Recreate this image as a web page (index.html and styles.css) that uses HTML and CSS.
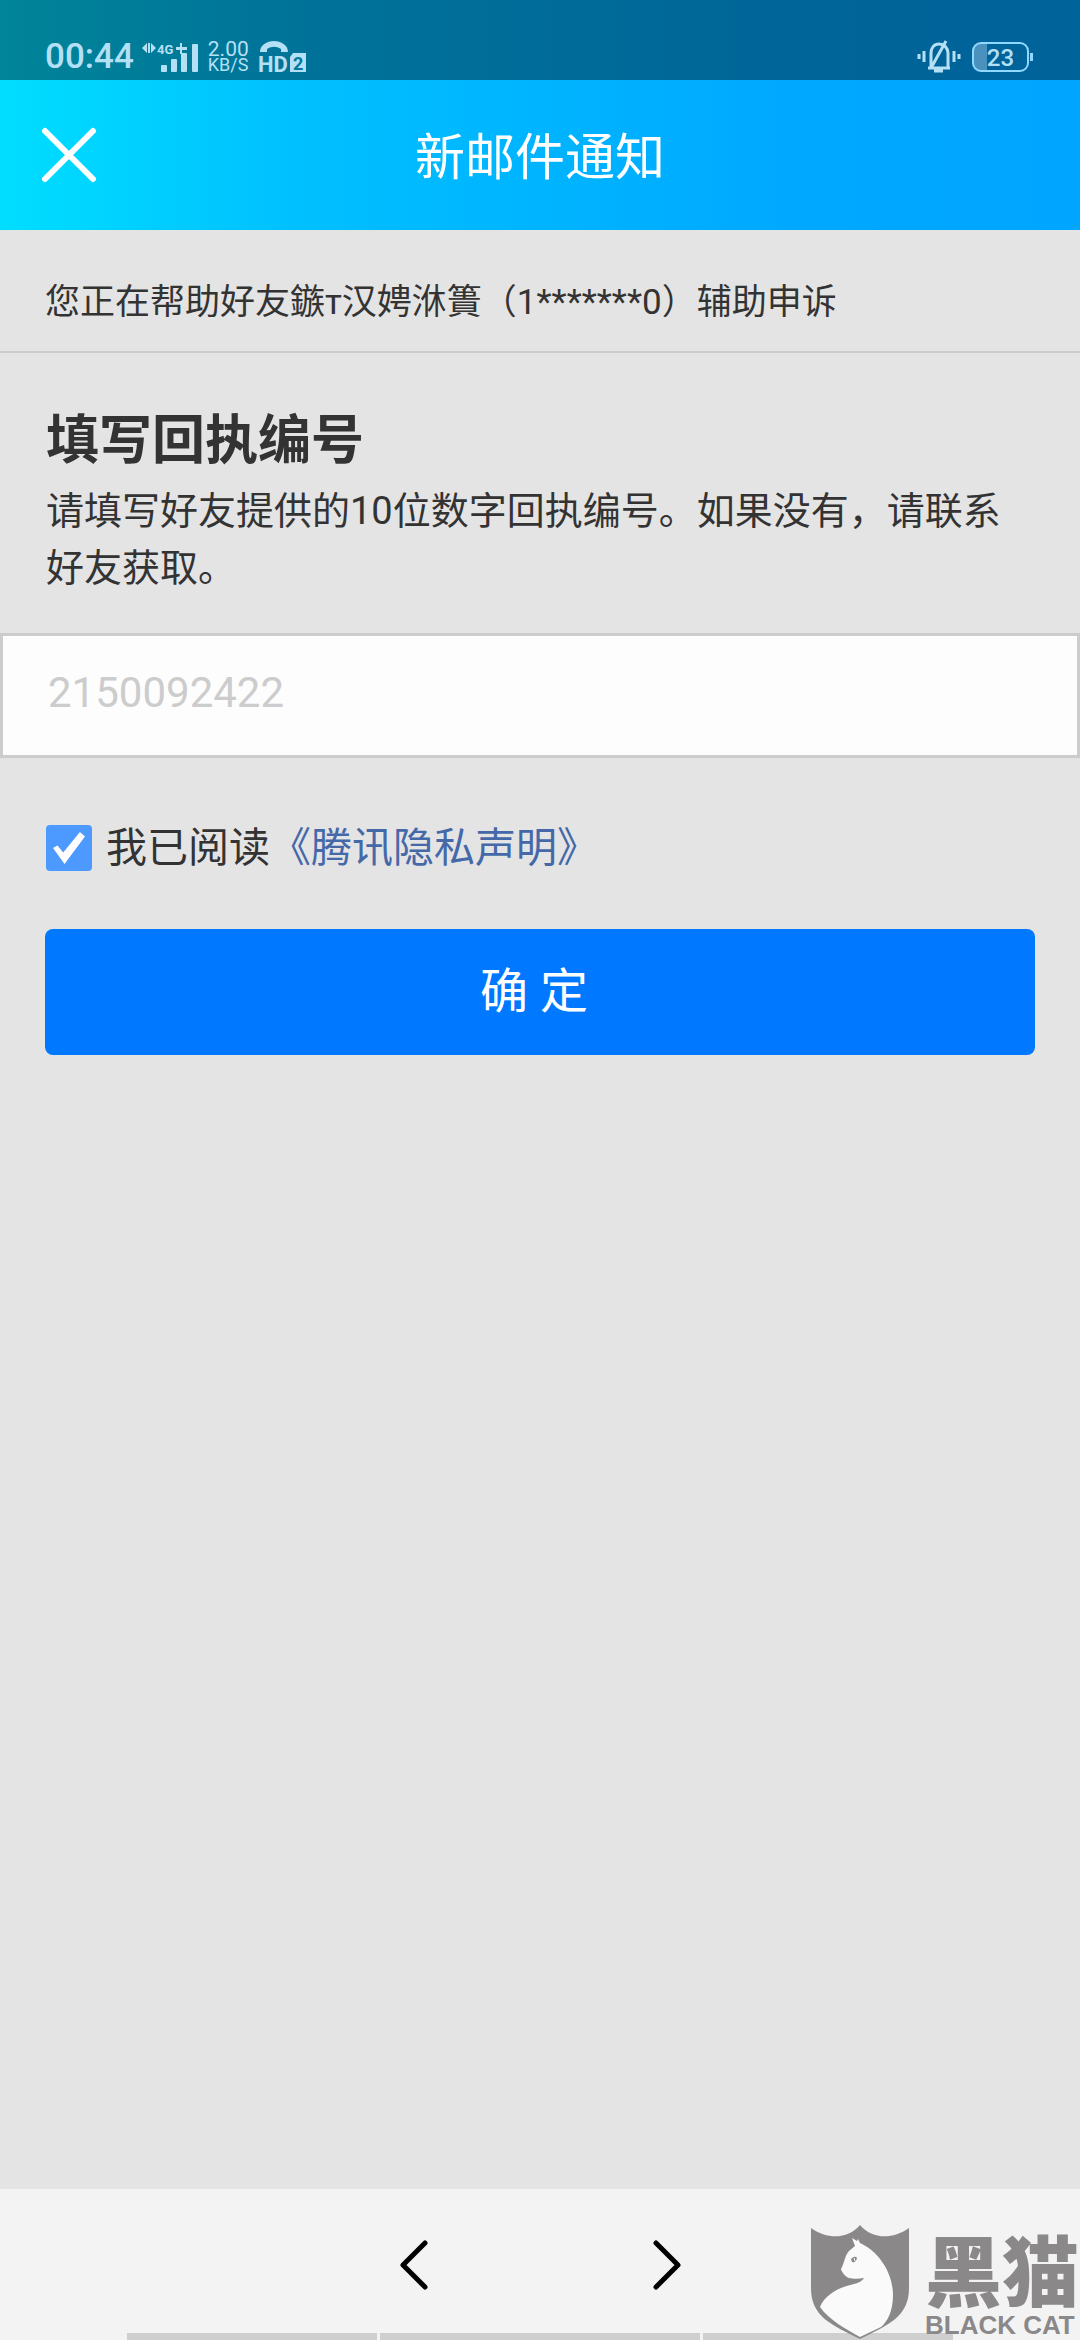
FILE: index.html
```html
<!DOCTYPE html>
<html lang="zh-CN">
<head>
  <meta charset="UTF-8" />
  <meta name="viewport" content="width=device-width, initial-scale=1" />
  <title>新邮件通知</title>
  <link rel="stylesheet" href="styles.css">
</head>
<body>

<div class="top">
  <div class="status-bar">
    <span class="clock">00:44</span>
    <svg class="signal" width="56" height="32" viewBox="0 0 56 32">
      <path d="M0 7l5-5v10zM6 2h2v10H6zM9 2l5 5-5 5z" />
      <text x="15" y="13">4G</text>
      <path d="M34 6h4V2h2v4h5v3h-5v4h-2V9h-4z" />
      <rect x="19" y="24" width="6" height="7" rx="1" />
      <rect x="29" y="18" width="6" height="13" rx="1" />
      <rect x="39" y="12" width="6" height="19" rx="1" />
      <rect x="50" y="3" width="6" height="28" rx="1" />
    </svg>
    <div class="speed">
      <span class="rate">2.00</span>
      <span class="unit">KB/S</span>
    </div>
    <svg class="volte" width="48" height="34" viewBox="0 0 48 34">
      <path d="M1 12C1 5 8 1 15 1s14 4 14 11h-7V9C17 6 13 6 8 9v3z" />
      <text x="-1" y="32">HD</text>
      <path d="M34 13h13v19H31V17z" />
      <text class="sim" x="34" y="30">2</text>
    </svg>
    <span class="spacer"></span>
    <svg class="bell" width="42" height="34" viewBox="0 0 42 34">
      <path d="M1 14v5M6 11v11M36 11v11M41 14v5M10 28h22M13 28V13c0-5 3-9 8-9s9 4 9 9v15M13 28L28 1M16 31h9" />
    </svg>
    <div class="battery"><span>23</span></div>
  </div>

  <header>
    <button class="close" type="button" aria-label="关闭">
      <svg width="54" height="54" viewBox="0 0 54 54"><path d="M3 3l48 48M51 3L3 51" /></svg>
    </button>
    <h1>新邮件通知</h1>
  </header>
</div>

<main>
  <p class="notice">您正在帮助好友鏃т汉娉㳜簣（1*******0）辅助申诉</p>

  <form class="receipt">
    <h2><label for="receipt-no">填写回执编号</label></h2>
    <p class="hint">请填写好友提供的10位数字回执编号。如果没有，请联系好友获取。</p>
    <input class="receipt-no" id="receipt-no" type="text" inputmode="numeric" placeholder="2150092422">

    <div class="agree">
      <input type="checkbox" id="agree" checked>
      <label for="agree">我已阅读</label><a href="#">《腾讯隐私声明》</a>
    </div>

    <button class="submit" type="button">确 定&nbsp;</button>
  </form>
</main>

<footer>
  <nav>
    <button type="button" aria-label="后退">
      <svg width="28" height="50" viewBox="0 0 28 50"><path d="M25 3L3 25l22 22" /></svg>
    </button>
    <button type="button" aria-label="前进">
      <svg width="28" height="50" viewBox="0 0 28 50"><path d="M3 3l22 22L3 47" /></svg>
    </button>
  </nav>
  <div class="strips"><span></span><span></span><span></span></div>

  <div class="watermark">
    <svg width="98" height="115" viewBox="0 0 98 115">
      <path class="shield" d="M0 3C17 15 37 14 49 0c12 14 32 15 49 3v60c0 29-21 37-49 51C21 100 0 92 0 63z" />
      <path class="cat" d="M41 13l5 3 1-2 2 4c18 8 33 29 33 52 0 17-6 27-12 32L49 112C35 104 18 95 9 82c5-13 20-20 34-23 5-1 9-4 10-6-5 1-11 1-15 0-3-1-7-5-8-9 4-7 3-12 8-18l6-5z" />
      <path class="eye" d="M40 34q4-4 6-1-1 5-5 4z" />
      <path class="glint" d="M43 33l1 3" />
    </svg>
    <div class="brand">
      <span class="brand-cn">黑猫</span>
      <span class="brand-en">BLACK CAT</span>
    </div>
  </div>
</footer>

</body>
</html>
```
FILE: styles.css
```css
* {
  margin: 0; padding: 0; box-sizing: border-box;
}
body {
  font-family: Roboto, 'Noto Sans CJK SC', sans-serif;
  background: #e4e4e4;
  color: #333;
  display: flex;
  flex-direction: column;
  min-height: 100vh;
}
button, input {
  font-family: inherit;
  border: none;
}
button {
  background: none;
}
svg {
  display: block;
  flex: none;
  overflow: visible;
}

/* top */
.top {
  background: linear-gradient(to right, #00deff, #00c0ff 27%, #00b4ff 50%, #00a8ff 75%, #00a5ff);
  color: white;
}
.status-bar {
  height: 80px;
  padding: 33px 51px 0 45px;
  background: rgba(0,0,0,0.4);
  color: #b4e0f5;
  display: flex;
  align-items: center;
}
.status-bar svg {
  fill: #b4e0f5;
}
.clock {
  font-size: 35px;
  line-height: 40px;
  font-weight: 500;
}
.signal {
  margin-left: 8px;
}
.signal text {
  font-size: 13px;
  font-weight: 700;
}
.speed {
  margin-left: 10px;
  display: flex;
  flex-direction: column;
}
.speed span {
  line-height: 16px;
}
.rate {
  font-size: 21px;
}
.unit {
  font-size: 18px;
}
.volte {
  margin-left: 10px;
}
.volte text {
  font-size: 22px;
  font-weight: 700;
}
.volte .sim {
  font-size: 18px;
  fill: #00789c;
}
.spacer {
  flex-grow: 1;
}
.status-bar .bell {
  fill: none;
  stroke: #b4e0f5;
  stroke-width: 3;
}
.battery {
  position: relative;
  width: 57px;
  height: 30px;
  margin-left: 12px;
  border: 2px solid #8fd8ff;
  border-radius: 9px;
  background: linear-gradient(to right, #4a92bd 25%, transparent 25%);
  text-align: center;
  font-size: 24px;
  line-height: 28px;
  font-weight: 500;
}
.battery::after {
  content: '';
  position: absolute;
  right: -6px;
  top: 9px;
  width: 3px;
  height: 8px;
  background: #8fd8ff;
}

header {
  height: 150px;
  padding: 0 42px;
  display: grid;
  grid-template-columns: 1fr auto 1fr;
  align-items: center;
}
.close {
  justify-self: start;
}
.close path {
  fill: none;
  stroke: white;
  stroke-width: 6;
  stroke-linecap: round;
}
header h1 {
  padding-top: 6px;
  font-size: 50px;
  line-height: 60px;
  font-weight: 400;
}

/* content */
main {
  flex-grow: 1;
}
.notice {
  padding: 44px 45px 20px;
  font-size: 35px;
  line-height: 57px;
  border-bottom: 2px solid #ccc;
}
.receipt {
  padding-top: 54px;
}
.receipt h2 {
  padding: 0 46px;
  font-size: 53px;
  line-height: 68px;
  font-weight: 700;
}
.hint {
  padding: 8px 46px 36px;
  font-size: 38px;
  line-height: 57px;
}
.receipt-no {
  display: block;
  width: 100%;
  height: 125px;
  padding: 0 45px 6px;
  border: 3px solid #ccc;
  background: #fdfdfd;
  color: #333;
  font-size: 42px;
}
.receipt-no::placeholder {
  color: #ccc;
}
.agree {
  display: flex;
  align-items: center;
  padding: 60px 46px 51px;
  font-size: 41px;
  line-height: 60px;
}
.agree input {
  appearance: none;
  width: 46px;
  height: 46px;
  margin-right: 14px;
  border-radius: 4px;
  background: #4c9aff;
  display: grid;
  place-items: center;
}
.agree input:checked::before {
  content: '';
  width: 32px;
  height: 32px;
  background: white;
  clip-path: polygon(0 50%, 14% 42%, 32% 64%, 84% 0, 100% 14%, 36% 100%);
}
.agree a {
  color: #4468a8;
  text-decoration: none;
}
.submit {
  display: block;
  width: calc(100% - 90px);
  height: 126px;
  margin: 0 45px;
  padding-bottom: 10px;
  border-radius: 8px;
  background: #0078ff;
  color: white;
  font-size: 48px;
}

/* bottom */
footer {
  position: relative;
  background: #f3f3f3;
}
nav {
  display: flex;
  justify-content: center;
  gap: 225px;
  padding: 51px 0 43px;
}
nav path {
  fill: none;
  stroke: black;
  stroke-width: 5;
  stroke-linecap: round;
  stroke-linejoin: round;
}
.strips {
  display: flex;
  justify-content: center;
  gap: 3px;
}
.strips span {
  width: 250px;
  height: 7px;
  background: #cfcfcf;
}
.strips span:nth-child(2) {
  width: 320px;
}
.watermark {
  position: absolute;
  right: 1px;
  bottom: 0;
  display: flex;
  align-items: flex-end;
  gap: 16px;
}
.shield {
  fill: #8a8889;
}
.cat {
  fill: #fafafa;
}
.eye {
  fill: #8a8889;
}
.glint {
  stroke: #fafafa;
}
.brand {
  display: flex;
  flex-direction: column;
  color: #8a8889;
}
.brand-cn {
  font-family: 'Noto Sans CJK SC', sans-serif;
  font-size: 77px;
  line-height: 84px;
  font-weight: 900;
}
.brand-en {
  font-family: 'Liberation Sans', sans-serif;
  font-size: 26px;
  line-height: 30px;
  font-weight: 700;
}
```
